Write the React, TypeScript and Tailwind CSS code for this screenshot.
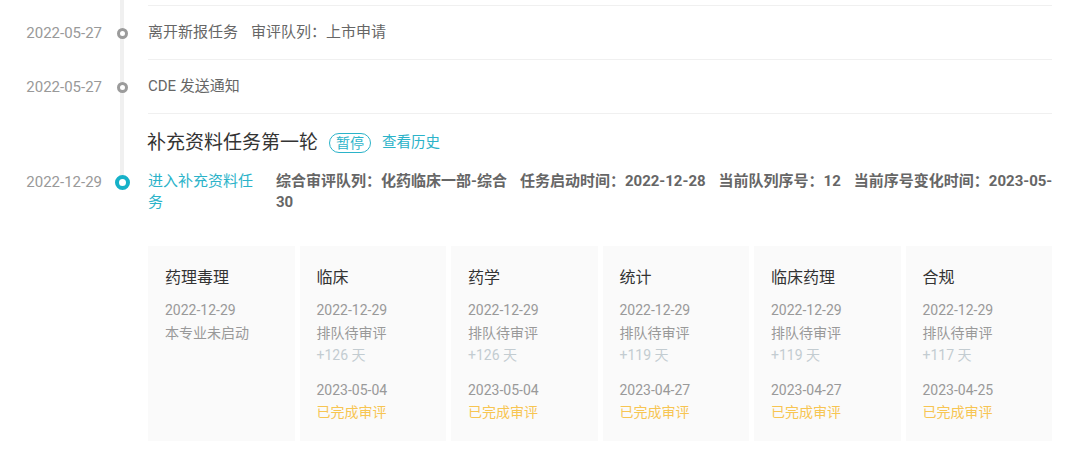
import React from "react";

const font = { fontFamily: "Roboto, 'Noto Sans CJK SC', sans-serif" };

type Card = {
  title: string;
  date: string;
  status: string;
  days?: string;
  doneDate?: string;
  done?: string;
};

const cards: Card[] = [
  { title: "药理毒理", date: "2022-12-29", status: "本专业未启动" },
  { title: "临床", date: "2022-12-29", status: "排队待审评", days: "+126 天", doneDate: "2023-05-04", done: "已完成审评" },
  { title: "药学", date: "2022-12-29", status: "排队待审评", days: "+126 天", doneDate: "2023-05-04", done: "已完成审评" },
  { title: "统计", date: "2022-12-29", status: "排队待审评", days: "+119 天", doneDate: "2023-04-27", done: "已完成审评" },
  { title: "临床药理", date: "2022-12-29", status: "排队待审评", days: "+119 天", doneDate: "2023-04-27", done: "已完成审评" },
  { title: "合规", date: "2022-12-29", status: "排队待审评", days: "+117 天", doneDate: "2023-04-25", done: "已完成审评" },
];

function Line() {
  return <div className="absolute inset-y-0 left-[18px] w-[4px] bg-[#f0f0f0]" />;
}

function GrayDot() {
  return <div className="relative z-10 h-[11px] w-[11px] rounded-full border-[3px] border-[#9b9b9b] bg-white" />;
}

export default function App() {
  return (
    <div className="h-[464px] w-[1080px] overflow-hidden bg-white" style={font}>
      {/* top cut-off row */}
      <div className="flex h-[6px]">
        <div className="w-[102px]" />
        <div className="relative w-[40px]"><Line /></div>
        <div className="ml-[6px] flex-1 border-b border-[#f0f0f0] mr-[28px]" />
      </div>

      {[
        <span key="a">离开新报任务<span className="ml-[13px]">审评队列：上市申请</span></span>,
        <span key="b">CDE 发送通知</span>,
      ].map((content, i) => (
        <div key={i} className="flex h-[54px]">
          <div className="flex w-[102px] items-center justify-end text-[15px] text-[#999]">2022-05-27</div>
          <div className="relative flex w-[40px] items-center justify-center">
            <Line />
            <GrayDot />
          </div>
          <div className="ml-[6px] mr-[28px] flex flex-1 items-center border-b border-[#f0f0f0] text-[15px] text-[#666]">
            {content}
          </div>
        </div>
      ))}

      {/* section title */}
      <div className="flex">
        <div className="w-[102px]" />
        <div className="relative w-[40px]"><Line /></div>
        <div className="ml-[5px] flex flex-1 items-center pt-[15px] pb-[14px]">
          <span className="text-[19px] leading-[28px] text-[#333]">补充资料任务第一轮</span>
          <span className="ml-[11px] flex h-[20px] items-center rounded-full border border-[#2bb3c9] px-[6px] text-[14px] text-[#2bb3c9]">
            暂停
          </span>
          <span className="ml-[11px] text-[14.5px] text-[#2bb3c9]">查看历史</span>
        </div>
      </div>

      {/* task row */}
      <div className="flex">
        <div className="flex h-[22px] w-[102px] items-center justify-end text-[15px] text-[#999]">2022-12-29</div>
        <div className="relative flex h-[22px] w-[40px] items-center justify-center">
          <div className="absolute top-0 left-[18px] h-[11px] w-[4px] bg-[#f0f0f0]" />
          <div className="relative z-10 h-[15px] w-[15px] rounded-full border-[4.5px] border-[#16b1c8] bg-white" />
        </div>
        <div className="ml-[6px] mr-[24px] flex flex-1">
          <div className="w-[108px] shrink-0 text-[15px] leading-[21px] text-[#2bb3c9]">进入补充资料任务</div>
          <div className="ml-[20px] flex-1 break-all text-[15px] font-bold leading-[21px] text-[#666]">
            <span className="mr-[13px]">综合审评队列：化药临床一部-综合</span>
            <span className="mr-[13px]">任务启动时间：2022-12-28</span>
            <span className="mr-[13px]">当前队列序号：12</span>
            <span>当前序号变化时间：2023-05-30</span>
          </div>
        </div>
      </div>

      {/* cards */}
      <div className="ml-[148px] mr-[28px] mt-[33px] grid grid-cols-6 gap-[5px]">
        {cards.map((c) => (
          <div key={c.title} className="h-[195px] bg-[#fafafa] px-[17px] pt-[20px]">
            <div className="text-[16px] leading-[24px] text-[#333]">{c.title}</div>
            <div className="mt-[9px] text-[14px] leading-[22.5px] text-[#999]">
              <div>{c.date}</div>
              <div>{c.status}</div>
              {c.days && <div className="text-[#c3ccd1]">{c.days}</div>}
              {c.doneDate && <div className="mt-[12px]">{c.doneDate}</div>}
              {c.done && <div className="text-[#f7c552]">{c.done}</div>}
            </div>
          </div>
        ))}
      </div>
    </div>
  );
}
